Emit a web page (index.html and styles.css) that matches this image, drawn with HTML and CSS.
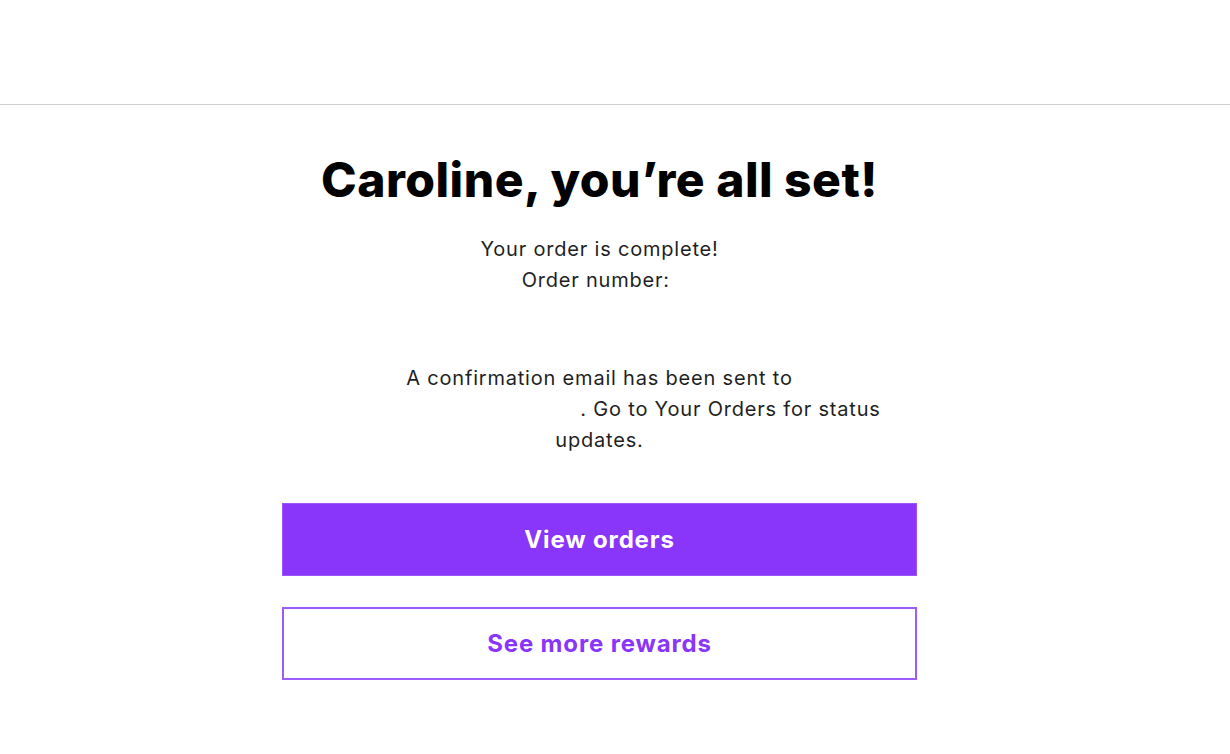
FILE: index.html
```html
<!DOCTYPE html>
<html lang="en">
<head>
<meta charset="utf-8">
<title>Order complete</title>
<link rel="stylesheet" href="styles.css">
</head>
<body>
<header class="site-header"></header>
<div class="page">
  <main class="confirm">
    <h1 class="confirm-title">Caroline, you’re all set!</h1>
    <div class="order-info">
      <p class="order-line">Your order is complete!</p>
      <p class="order-line">Order number: <span class="order-number"></span></p>
    </div>
    <p class="email-note">A confirmation email has been sent to <span class="email-address"></span>. Go to Your Orders for status updates.</p>
    <div class="actions">
      <a class="btn btn-primary" href="#">View orders</a>
      <a class="btn btn-outline" href="#">See more rewards</a>
    </div>
  </main>
</div>
</body>
</html>
```

FILE: styles.css
```css
* { box-sizing: border-box; }
html, body { margin: 0; padding: 0; background: #fff; }
body {
  font-family: Inter, "Noto Sans", "DejaVu Sans", sans-serif;
  color: #1f1f1f;
}
.site-header {
  height: 105px;
  border-bottom: 1px solid #cfcfcf;
}
.page {
  display: flex;
  justify-content: center;
  padding-right: 31px;
}
.confirm {
  width: 635px;
  text-align: center;
}
.confirm-title {
  margin: 47px 0 0;
  font-size: 48px;
  line-height: 56px;
  font-weight: 800;
  color: #000;
  letter-spacing: 0.5px;
}
.order-info {
  margin-top: 26px;
}
.order-line {
  margin: 0;
  font-size: 20px;
  line-height: 31px;
  letter-spacing: 0.8px;
}
.order-number { display: inline-block; min-width: 1px; }
.email-note {
  margin: 67px auto 0;
  font-size: 20px;
  line-height: 31px;
  letter-spacing: 0.8px;
}
.email-address {
  display: inline-block;
  width: 262px;
}
.actions {
  margin-top: 47px;
  display: flex;
  flex-direction: column;
  gap: 31px;
}
.btn {
  display: flex;
  align-items: center;
  justify-content: center;
  height: 73px;
  font-size: 24px;
  font-weight: 700;
  letter-spacing: 0.85px;
  text-decoration: none;
}
.btn-primary {
  background: #8a35fa;
  color: #fff;
  border: 1px solid #9b55fb;
}
.btn-outline {
  background: #fff;
  color: #8a35fa;
  border: 2px solid #9d5cfb;
}
```
